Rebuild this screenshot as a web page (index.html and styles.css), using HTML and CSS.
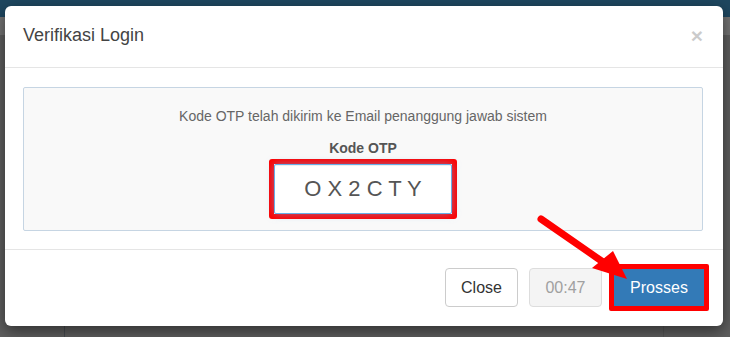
FILE: index.html
```html
<!DOCTYPE html>
<html lang="id">
<head>
    <meta charset="UTF-8">
    <meta name="viewport" content="width=device-width, initial-scale=1.0">
    <title>Verifikasi Login</title>
    <link rel="stylesheet" href="styles.css">
</head>
<body>
    <!-- Page behind the backdrop -->
    <div class="page">
        <div class="topbar"></div>
        <div class="subbar"></div>
        <div class="page-body">
            <aside class="sidebar"></aside>
            <main class="content"></main>
        </div>
    </div>

    <!-- OTP dialog -->
    <div class="modal">
        <div class="modal-header">
            <h4 class="modal-title">Verifikasi Login</h4>
            <button class="close" type="button">&times;</button>
        </div>

        <div class="modal-body">
            <div class="well">
                <p class="note">Kode OTP telah dikirim ke Email penanggung jawab sistem</p>
                <label class="otp-label">Kode OTP</label>
                <span class="mark">
                    <span class="otp-input">O X 2 C T Y</span>
                </span>
            </div>
        </div>

        <div class="modal-footer">
            <button class="btn btn-default" type="button">Close</button>
            <button class="btn btn-timer" type="button" disabled>00:47</button>
            <span class="mark mark-btn">
                <button class="btn btn-primary" type="button">Prosses</button>
            </span>
        </div>
    </div>

    <!-- Annotation arrow -->
    <svg class="arrow" width="730" height="337" viewBox="0 0 730 337">
        <line x1="541" y1="219" x2="603" y2="262" stroke="#ff0000" stroke-width="7" stroke-linecap="round"/>
        <polygon points="627,279 592,268 613,251" fill="#ff0000"/>
    </svg>
</body>
</html>
```

FILE: styles.css
```css
:root {
    --backdrop: #5f5f5f;
    --topbar: #1e4760;
    --text: #333333;
    --muted: #666666;
    --primary: #337ab7;
    --mark: #ff0000;
}

body {
    margin: 0;
    font-family: 'Liberation Sans', Arial, sans-serif;
    font-size: 14px;
    color: var(--text);
    background: var(--backdrop);
    width: 730px;
    height: 337px;
    overflow: hidden;
    position: relative;
}

/* Page behind the modal (already dimmed) */
.page {
    display: flex;
    flex-direction: column;
    height: 100%;
}

.topbar {
    height: 17px;
    background: var(--topbar);
}

.subbar {
    height: 18px;
    background: #747474;
}

.page-body {
    flex: 1;
    display: flex;
}

.sidebar {
    width: 64px;
    border-right: 1px solid #474b50;
}

.content {
    width: 598px;
    border-right: 1px solid #555555;
}

/* Modal */
.modal {
    position: absolute;
    top: 6px;
    left: 5px;
    width: 718px;
    height: 320px;
    background: #ffffff;
    border-radius: 6px;
    box-shadow: 0 5px 15px rgba(0, 0, 0, 0.5);
    display: flex;
    flex-direction: column;
}

.modal-header {
    display: flex;
    align-items: center;
    justify-content: space-between;
    padding: 16px 20px 19px 18px;
    border-bottom: 1px solid #e5e5e5;
}

.modal-title {
    margin: 0;
    font-size: 18px;
    font-weight: normal;
    line-height: 26px;
    color: #444444;
}

.close {
    padding: 0;
    border: 0;
    background: none;
    font-family: 'Liberation Sans', Arial, sans-serif;
    font-size: 21px;
    font-weight: bold;
    line-height: 1;
    color: #000000;
    opacity: 0.2;
    cursor: pointer;
}

.modal-body {
    padding: 19px 20px 18px 18px;
}

.well {
    display: flex;
    flex-direction: column;
    align-items: center;
    padding: 18px 19px 11px;
    background: #f9f9f9;
    border: 1px solid #c6d5e3;
    border-radius: 2px;
}

.note {
    margin: 0 0 12px;
    line-height: 20px;
    color: var(--muted);
}

.otp-label {
    margin-bottom: 1px;
    line-height: 20px;
    font-weight: bold;
    color: #555555;
}

/* Red annotation frame */
.mark {
    display: inline-flex;
    border: 5px solid var(--mark);
    border-radius: 3px;
}

.otp-input {
    width: 176px;
    height: 48px;
    display: flex;
    align-items: center;
    justify-content: center;
    background: #ffffff;
    border: 1px solid #66afe9;
    border-radius: 2px;
    box-shadow: inset 0 1px 1px rgba(0, 0, 0, 0.075), 0 0 8px rgba(102, 175, 233, 0.6);
    font-size: 22px;
    color: #555555;
    white-space: pre;
}

.modal-footer {
    display: flex;
    justify-content: flex-end;
    align-items: center;
    padding: 14px 14px 14px 18px;
    border-top: 1px solid #e5e5e5;
}

.btn {
    height: 39px;
    padding: 0 15px;
    font-family: 'Liberation Sans', Arial, sans-serif;
    font-size: 16px;
    border-radius: 4px;
    border: 1px solid transparent;
}

.btn-default {
    width: 73px;
    background: #ffffff;
    border-color: #cccccc;
    color: var(--text);
}

.btn-timer {
    width: 73px;
    margin-left: 11px;
    background: #f4f4f4;
    border-color: #dddddd;
    color: #a0a0a0;
}

.mark-btn {
    margin-left: 7px;
    border-radius: 2px;
}

.btn-primary {
    width: 90px;
    height: 37px;
    border: 0;
    border-radius: 0;
    background: var(--primary);
    color: #ffffff;
}

.arrow {
    position: absolute;
    top: 0;
    left: 0;
    pointer-events: none;
}
```
